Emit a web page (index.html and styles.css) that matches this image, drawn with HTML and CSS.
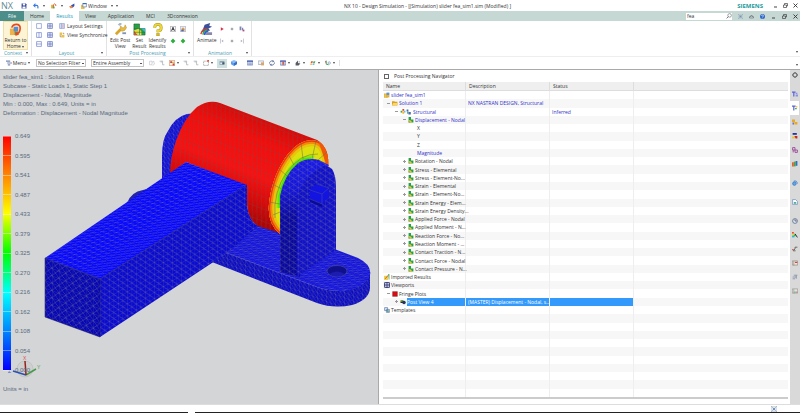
FILE: index.html
```
<!DOCTYPE html>
<html lang="en">
<head>
  <meta charset="utf-8">
  <title>NX 10 - Design Simulation</title>
  <link rel="stylesheet" href="styles.css">
</head>
<body>
  <svg class="sprite" aria-hidden="true">
    <symbol id="save" viewBox="0 0 10 10"><path fill="#2b3f98" d="M1 1h7l1 1v7H1z"/><path fill="#fff" d="M3 1h4v3H3zM2.500 6h5v3h-5z"/></symbol>
    <symbol id="undo" viewBox="0 0 10 10"><path fill="none" stroke="#3a7be0" stroke-width="2" d="M2 4h4q3 0 2 5"/><path fill="#3a7be0" d="M0 4l4-4v8z"/></symbol>
    <symbol id="repeat" viewBox="0 0 10 10"><path fill="#e8b64a" d="M0 3h4v6H0z"/><path fill="none" stroke="#e0502a" stroke-width="1.500" d="M4 7V3q2-3 4 0v2"/><path fill="#5aa45a" d="M3 6h3v3H3z"/></symbol>
    <symbol id="erase" viewBox="0 0 10 10"><path fill="#3850b0" d="M3 4l6-3v4L6 8z"/><path fill="#e08a50" d="M0 6l4-2 3 3-4 2z"/></symbol>
    <symbol id="window" viewBox="0 0 10 10"><path fill="#f0c040" d="M0 3h6v7H0z"/><path fill="#fff" stroke="#3a6ac0" d="M3 .5h6v6H3z"/><path fill="#3a6ac0" d="M3 0h6v2H3z"/></symbol>
    <symbol id="min" viewBox="0 0 10 10"><path fill="#444" d="M2 7h6v2H2z"/></symbol>
    <symbol id="restore" viewBox="0 0 10 10"><path fill="none" stroke="#444" stroke-width="1.400" d="M3 4V1h6v5H7M1 4h6v5H1z"/></symbol>
    <symbol id="close" viewBox="0 0 10 10"><path stroke="#333" stroke-width="1.800" d="M1 1l8 8M9 1L1 9"/></symbol>
    <symbol id="search" viewBox="0 0 10 10"><circle cx="6" cy="4" r="3" fill="none" stroke="#667"/><path stroke="#667" stroke-width="1.500" d="M4 6L1 9"/></symbol>
    <symbol id="full" viewBox="0 0 10 10"><path fill="none" stroke="#68809a" d="M0 0l3 3M10 0L7 3M0 10l3-3M10 10L7 7"/><path fill="#6f93bc" d="M3 3h4v4H3z"/><path fill="none" stroke="#b4c0cc" d="M1 1h8v8H1z"/></symbol>
    <symbol id="up" viewBox="0 0 10 10"><path fill="none" stroke="#556" d="M1 6l4-4 4 4M1 8h8V6L5 4 1 6z"/></symbol>
    <symbol id="help" viewBox="0 0 10 10"><circle cx="5" cy="5" r="5" fill="#2f66c8"/><path fill="none" stroke="#fff" stroke-width="1.200" d="M3 4q0-2 2-2t2 2l-2 2M5 7v1.500"/></symbol>

    <symbol id="return" viewBox="0 0 14 14"><path fill="#f0b04c" d="M1 6h6v7H1z"/><path fill="#5c8cd0" d="M5 4h5v5H5z"/><path fill="#5aa05a" d="M6 9h4v4H6z"/><path fill="none" stroke="#e8481c" stroke-width="1.800" d="M3 5q1-3.500 5-3.500t4 4q0 5-3 6"/><path fill="#e8481c" d="M7 9v5l4-2z"/></symbol>
    <symbol id="one" viewBox="0 0 10 10"><path fill="#fff" stroke="#6a7fc4" d="M1 1h8v8H1z"/></symbol>
    <symbol id="four" viewBox="0 0 10 10"><path fill="#e8ecfa" stroke="#4a5fb4" d="M1 1h8v8H1zM5 1v8M1 5h8"/></symbol>
    <symbol id="cols" viewBox="0 0 10 10"><path fill="#fff" stroke="#5a6fc4" d="M1 1h8v8H1zM5 1v8"/></symbol>
    <symbol id="rows" viewBox="0 0 10 10"><path fill="#fff" stroke="#5a6fc4" d="M1 1h8v8H1zM1 5h8"/></symbol>
    <symbol id="settings" viewBox="0 0 10 10"><path fill="#dfe6f8" stroke="#7a8cc8" d="M1 1h8v8H1zM4 1v8"/><path stroke="#c87a9a" d="M5 3.500h3M5 6.500h3"/></symbol>
    <symbol id="sync" viewBox="0 0 10 10"><path fill="#e8c04a" d="M1 1h4v4H1zM4 5h5v4H4z"/><path fill="none" stroke="#8a6a2a" d="M2 5v3h2M6 2h2v2"/></symbol>
    <symbol id="wrench" viewBox="0 0 14 14"><path fill="none" stroke="#d8a628" stroke-width="3" d="M2 12l5-5"/><path fill="#e8bc3c" stroke="#b08a28" stroke-width=".5" d="M7 3l2 2 2 0 1-3 1.500 3-2 3-3 1-2-2z"/><path fill="#a8b4c8" d="M6 0h2v2l-2 1-2-1z"/><path fill="#8494b4" d="M9 10h4v2H9z"/></symbol>
    <symbol id="result" viewBox="0 0 14 14"><path fill="#28a048" stroke="#175c2a" stroke-width=".6" d="M1 1h6v5h6v7H1z"/><path fill="#f0d838" d="M1 8l5-2 3 3v4H4z"/><path fill="#e84a2c" d="M1 9l4 4H1z"/><path fill="#3ab8d8" d="M9 6h4v4z"/><path stroke="#174" stroke-width=".6" d="M1 6h6M7 6v7M1 10h12"/></symbol>
    <symbol id="identify" viewBox="0 0 14 14"><path fill="none" stroke="#a89018" stroke-width="3" d="M4 5q0-3.500 3.500-3.500T11 5 7.500 8.500v1.500"/><path fill="none" stroke="#ecd83c" stroke-width="2" d="M4 5q0-3.500 3.500-3.500T11 5 7.500 8.500v1.500"/><path fill="#d8bc28" stroke="#a89018" stroke-width=".5" d="M6 11h3v3H6z"/></symbol>
    <symbol id="anno" viewBox="0 0 10 10"><path fill="#fff" stroke="#888" d="M.5.500h9v9h-9z"/><path fill="none" stroke="#223" stroke-width="1.400" d="M2.500 8L5 2l2.500 6M3.500 6h3"/></symbol>
    <symbol id="drag" viewBox="0 0 10 10"><path fill="#eef" stroke="#99a" d="M.5.500h9v9h-9z"/><path fill="#d8a040" d="M2 5l3-3 3 3-1 4z"/><path fill="#4a68b8" d="M2 6h4v3H2z"/></symbol>
    <symbol id="plus" viewBox="0 0 10 10"><path fill="#2fae3f" d="M5 1l4 4-4 4-4-4z"/></symbol>
    <symbol id="animate" viewBox="0 0 14 14"><path fill="#3c4f9a" d="M5 2l6-2-1 3 3 1-4 2 2 2-5 1-4 1z"/><path fill="none" stroke="#e03a2a" stroke-width="1.500" d="M1 12q1-6 7-6"/><path fill="none" stroke="#3aa84a" stroke-width="1.500" d="M3 12.500q1-4.500 5-5"/><path fill="none" stroke="#2f5bd8" stroke-width="2" d="M5 13q0-4 4-4"/><path fill="#88a" d="M7 10h6v3H6z"/></symbol>
    <symbol id="play" viewBox="0 0 10 10"><path fill="#d8324a" d="M3 2l5 3-5 3z"/></symbol>
    <symbol id="stop" viewBox="0 0 10 10"><path fill="#a9a9b3" d="M3 3h4v4H3z"/></symbol>
    <symbol id="export" viewBox="0 0 10 10"><path fill="#7a88b0" d="M1 1h3v6H1zM5 3h2v4H5z"/><path fill="#b04a8a" d="M6 6h3v3H6z"/></symbol>
    <symbol id="prev" viewBox="0 0 10 10"><path fill="#aab" d="M2 1h1v8H2zM7 3v4L4 5z"/></symbol>
    <symbol id="next" viewBox="0 0 10 10"><path fill="#aab" d="M7 1h1v8H7zM3 3v4l3-2z"/></symbol>

    <symbol id="menu" viewBox="0 0 10 10"><path fill="#7a8ab0" d="M0 1h7v2H0zM2 4h8v2H2zM3 7h4v2H3z"/></symbol>
    <symbol id="grey" viewBox="0 0 10 10"><path fill="none" stroke="#b8bcc4" d="M1 2h4v6H1zM5 4l3-2 1 5-3 2"/></symbol>
    <symbol id="path" viewBox="0 0 10 10"><path fill="none" stroke="#b4b8c0" stroke-width="1.500" d="M1 2h5v6h3M3 4l3-2"/></symbol>
    <symbol id="pick" viewBox="0 0 10 10"><path fill="#fdf3e4" stroke="#cc7a50" d="M.5.500h9v9h-9z"/><path fill="#c8463a" d="M2 2h3v3H2zM6 6h3v3H6z"/><path fill="#e0b040" d="M5 3h3v2H5z"/></symbol>
    <symbol id="rect" viewBox="0 0 10 10"><path fill="none" stroke="#777" stroke-dasharray="2 1" d="M1 2h8v7H1z"/><path fill="#d85a3a" d="M7 0h3v3H7z"/></symbol>
    <symbol id="shade" viewBox="0 0 10 10"><path fill="#7f93a8" d="M1 2h8v6H1z"/><path fill="#dfeaf4" d="M2 4h3v3H2z"/><path fill="#456" d="M6 4h3v3H6z"/></symbol>
    <symbol id="cube" viewBox="0 0 10 10"><path fill="#8abcf4" d="M5 0l5 2-5 3-5-3z"/><path fill="#5a9cf0" d="M0 2l5 3v5L0 7z"/><path fill="#3470c8" d="M10 2L5 5v5l5-3z"/></symbol>
    <symbol id="sheet" viewBox="0 0 10 10"><path fill="#e6ecf8" stroke="#5a70b0" d="M.5 1.500h9v7h-9z"/><path fill="#3f5cb0" d="M0 1h10v2H0z"/><path stroke="#5a70b0" d="M2 5h6M2 7h6"/></symbol>
    <symbol id="zoombox" viewBox="0 0 10 10"><path fill="#eef1f8" stroke="#8a96b0" d="M.5 1.500h9v6h-9z"/><path fill="#d8a86a" d="M5 4h5v5H5z"/></symbol>
    <symbol id="rotate" viewBox="0 0 10 10"><path fill="none" stroke="#5c6f98" stroke-width="1.500" d="M1 6a4 4 0 016-4M9 4a4 4 0 01-6 4"/><path fill="#5c6f98" d="M6 0l3 2-3 2zM4 6v4L1 8z"/></symbol>
    <symbol id="grid" viewBox="0 0 10 10"><path fill="#fff" stroke="#5060a8" d="M.5 1.500h9v7h-9zM3.500 1v8M6.500 1v8"/><path fill="#5868b8" d="M0 1h10v2H0z"/><path fill="#d86040" d="M4 3h3v5H4z"/></symbol>
    <symbol id="solid" viewBox="0 0 10 10"><path fill="#555c66" d="M1 5l4-4v4l4 1-3 3H1z"/><path fill="#9aa" d="M6 2h2v2H6z"/></symbol>
    <symbol id="colors" viewBox="0 0 10 10"><path fill="#e8582c" d="M2 2h3l-1 3H1z"/><path fill="#50b050" d="M6 2h3L8 5H5z"/><path fill="#f0a828" d="M1 6h3L3 8H0z"/><path fill="#38a8e0" d="M5 6h3L7 8H4z"/></symbol>
    <symbol id="axes" viewBox="0 0 10 10"><path fill="none" stroke="#3a9a4a" stroke-width="1.500" d="M2 1v6l4 1"/><path fill="#d8484a" d="M0 2h2v2H0z"/><circle cx="7" cy="5" r="2" fill="none" stroke="#6a7fb0"/></symbol>

    <symbol id="sim" viewBox="0 0 10 10"><path fill="#f2c94a" stroke="#a98428" stroke-width=".6" d="M0 3h6v6H0z"/><path fill="#5a94d8" d="M4 1h5v4H4z"/><path fill="#e8b030" d="M3 5h6v4H3z"/></symbol>
    <symbol id="folder" viewBox="0 0 10 10"><path fill="#d8a028" d="M0 2h4l1 1h4v6H0z"/><path fill="#f8d868" d="M2 5h8L8 9H0z"/></symbol>
    <symbol id="struct" viewBox="0 0 18 10"><path fill="#38a848" d="M0 3h3v3H0z"/><path fill="#e84030" d="M3 0h3v3H3z"/><path fill="#f0c030" d="M3 4h3v4H3z"/><path fill="#38b0e0" d="M6 3h2v3H6z"/><path fill="#4a6ab8" d="M10 1h3v3h-3zM13 5h4v4h-4z"/><path fill="#38a060" d="M11 4h2v4h-2z"/></symbol>
    <symbol id="fringe" viewBox="0 0 10 10"><path fill="#26a04a" d="M1 0h4v4h4v5H1z"/><path fill="#e8c838" d="M1 5l4 1 2 3H3z"/><path fill="#e06a2c" d="M1 7l2 2H1z"/></symbol>
    <symbol id="import" viewBox="0 0 10 10"><path fill="#f0d050" d="M0 3h7v7H0z"/><path stroke="#b84a38" stroke-width="1.300" d="M2 8l5-6"/><path fill="#48a058" d="M7 0h2v9H8z"/></symbol>
    <symbol id="viewport" viewBox="0 0 10 10"><path fill="#dfe3f8" stroke="#282f68" stroke-width="1.400" d="M1 1h8v8H1zM5 0v10M0 5h10"/></symbol>
    <symbol id="plots" viewBox="0 0 10 10"><path fill="#d80c14" stroke="#611" stroke-width=".6" d="M1 1h8v8H1z"/></symbol>
    <symbol id="post" viewBox="0 0 12 10"><path fill="#2a2a2a" d="M1 2h6v5H1z"/><path fill="#e8b828" d="M1 2h2v3H1z"/><circle cx="8" cy="6" r="3.500" fill="#26335c"/><path fill="#3cb04a" d="M3 1h3v3H3z"/></symbol>
    <symbol id="template" viewBox="0 0 10 10"><path fill="#dfe7f4" stroke="#4a68a0" d="M1 1h5v5H1zM4 4h5v5H4z"/><path fill="#3a9a68" d="M5 6h3v2H5z"/></symbol>

    <symbol id="gear" viewBox="0 0 10 10"><circle cx="5" cy="5" r="3.500" fill="none" stroke="#444" stroke-width="1.500"/><path stroke="#444" d="M5 0v2M5 8v2M0 5h2M8 5h2"/></symbol>
    <symbol id="nav" viewBox="0 0 10 10"><path fill="#5a62d8" d="M0 1h6v2H4v6H2V3H0z"/><path fill="#8a90e8" d="M6 3h3v2H6zM6 6h4v3H6z"/></symbol>
    <symbol id="postnav" viewBox="0 0 10 10"><path fill="#5a62d8" d="M0 1h6v2H4v6H2V3H0z"/><path fill="#e8b838" d="M6 2h3v2H6z"/><path fill="#48b060" d="M5 5h3v2H5z"/></symbol>
    <symbol id="part" viewBox="0 0 10 10"><path fill="#e8a828" d="M0 1h5v4H0zM4 5h5v4H4z"/><path fill="#4a58b0" d="M1 6h2v3H1z"/></symbol>
    <symbol id="reuse" viewBox="0 0 10 10"><path fill="#28309a" d="M1 0h7v3H1z"/><path fill="#e8c828" d="M0 6h5v3H0z"/><path fill="#c8282c" d="M4 5h5v4H6z"/></symbol>
    <symbol id="motion" viewBox="0 0 10 10"><path fill="none" stroke="#9a4a98" stroke-width="1.500" d="M1 1h4v4H1zM5 5h4v4H5zM2 5v4"/></symbol>
    <symbol id="lib" viewBox="0 0 10 10"><path fill="#e86028" d="M0 2h3v7H0z"/><path fill="#48a848" d="M3 1h3v8H3z"/><path fill="#2c6fc0" d="M6 0h3v8H6z"/></symbol>
    <symbol id="web" viewBox="0 0 10 10"><circle cx="4" cy="6" r="3" fill="#5aa8e8" stroke="#2a6cb8"/><path fill="none" stroke="#3c80d0" stroke-width="1.400" d="M3 2q5-2 6 4"/></symbol>
    <symbol id="doc" viewBox="0 0 10 10"><path fill="#fff" stroke="#4a7fb8" d="M1 1h5l3 3v5H1z"/><path fill="#58a8a0" d="M3 5h4v3H3z"/></symbol>
    <symbol id="clock" viewBox="0 0 10 10"><circle cx="5" cy="5" r="4" fill="#dde4ee" stroke="#556c8c" stroke-width="1.300"/><path fill="none" stroke="#334" d="M5 2v3h3"/></symbol>
    <symbol id="material" viewBox="0 0 10 10"><path fill="#f04828" d="M0 0h3v3H0z"/><path fill="#e8e028" d="M0 3h3v3H0z"/><path fill="#28b8d8" d="M0 6h4v3H0z"/><path fill="#30b850" d="M3 4h3v3H3z"/><path stroke="#222" stroke-width="1.500" d="M5 3l4 6"/></symbol>
    <symbol id="robot" viewBox="0 0 10 10"><path fill="none" stroke="#666" stroke-width="1.600" d="M9 2H5v3L2 8h4"/><path fill="#c87050" d="M0 5h3v2H0z"/></symbol>
    <symbol id="card" viewBox="0 0 10 10"><path fill="#e8e4e0" stroke="#8a7a70" d="M.5 1.500h9v7h-9zM3 2v7"/><path fill="#c8483c" d="M5 3h4v2H5z"/></symbol>
    <symbol id="scene" viewBox="0 0 10 10"><path fill="#e4e4e0" stroke="#8a8a84" d="M.5 1.500h9v7h-9zM3 2v7"/><path fill="#58a078" d="M4 6h2v2H4z"/><path fill="#c87860" d="M7 6h2v2H7z"/></symbol>
    <symbol id="flow" viewBox="0 0 10 10"><path fill="none" stroke="#7c8ba8" stroke-width="1.300" d="M3 2h6M1 5h7M1 8h4M7 2v6"/></symbol>
  </svg>

  <header class="titlebar">
    <span class="nx">NX</span>
    <div class="quick">
      <button aria-label="Save"><svg><use href="#save"/></svg></button>
      <button class="drop" aria-label="Undo"><svg><use href="#undo"/></svg></button>
      <button class="drop" aria-label="Repeat"><svg><use href="#repeat"/></svg></button>
      <button aria-label="Erase"><svg><use href="#erase"/></svg></button>
      <button class="drop"><svg><use href="#window"/></svg>Window</button>
      <button class="drop more" aria-label="Customize"></button>
    </div>
    <h1>NX 10 - Design Simulation - [(Simulation) slider fea_sim1.sim (Modified) ]</h1>
    <span class="brand">SIEMENS</span>
    <div class="controls">
      <button aria-label="Minimize"><svg><use href="#min"/></svg></button>
      <button aria-label="Restore"><svg><use href="#restore"/></svg></button>
      <button aria-label="Close"><svg><use href="#close"/></svg></button>
    </div>
  </header>

  <nav class="tabs">
    <a class="file" href="#">File</a>
    <a href="#">Home</a>
    <a class="active" href="#">Results</a>
    <a href="#">View</a>
    <a href="#">Application</a>
    <a href="#">MCI</a>
    <a href="#">3Dconnexion</a>
    <label class="search"><input type="text" value="fea" aria-label="Command finder"><svg><use href="#search"/></svg></label>
    <div class="controls">
      <button aria-label="Full screen"><svg><use href="#full"/></svg></button>
      <button aria-label="Minimize ribbon"><svg><use href="#up"/></svg></button>
      <button aria-label="Help"><svg><use href="#help"/></svg></button>
      <button aria-label="Minimize"><svg><use href="#min"/></svg></button>
      <button aria-label="Restore"><svg><use href="#restore"/></svg></button>
      <button aria-label="Close"><svg><use href="#close"/></svg></button>
    </div>
  </nav>

  <div class="ribbon">
    <section class="group context">
      <div class="tools">
        <button class="big hot"><svg><use href="#return"/></svg><span>Return to<br>Home <i class="caret"></i></span></button>
      </div>
      <h2>Context</h2>
    </section>
    <section class="group layout">
      <div class="tools">
        <div class="views">
          <button aria-label="Single"><svg><use href="#one"/></svg></button>
          <button aria-label="Four views"><svg><use href="#four"/></svg></button>
          <button aria-label="Side by side"><svg><use href="#cols"/></svg></button>
          <button aria-label="Six views"><svg><use href="#four"/></svg></button>
          <button aria-label="Upper and lower"><svg><use href="#rows"/></svg></button>
          <button aria-label="Nine views"><svg><use href="#four"/></svg></button>
        </div>
        <div class="lines">
          <button><svg><use href="#settings"/></svg>Layout Settings</button>
          <button><svg><use href="#sync"/></svg>View Synchronize</button>
        </div>
      </div>
      <h2>Layout</h2>
    </section>
    <section class="group post">
      <div class="tools">
        <button class="big"><svg><use href="#wrench"/></svg><span>Edit Post<br>View</span></button>
        <button class="big"><svg><use href="#result"/></svg><span>Set<br>Result</span></button>
        <button class="big"><svg><use href="#identify"/></svg><span>Identify<br>Results</span></button>
        <div class="small two">
          <button aria-label="Annotation"><svg><use href="#anno"/></svg></button>
          <button aria-label="Drag annotation"><svg><use href="#drag"/></svg></button>
          <button aria-label="Previous mode"><svg><use href="#plus"/></svg></button>
          <button aria-label="Next mode"><svg><use href="#plus"/></svg></button>
        </div>
      </div>
      <h2>Post Processing</h2>
    </section>
    <section class="group anim">
      <div class="tools">
        <button class="big"><svg><use href="#animate"/></svg><span>Animate</span></button>
        <div class="small three">
          <button aria-label="Play"><svg><use href="#play"/></svg></button>
          <button aria-label="Stop"><svg><use href="#stop"/></svg></button>
          <button aria-label="Export"><svg><use href="#export"/></svg></button>
          <button aria-label="Previous"><svg><use href="#prev"/></svg></button>
          <button aria-label="Pause"><svg><use href="#stop"/></svg></button>
          <button aria-label="Next"><svg><use href="#next"/></svg></button>
        </div>
      </div>
      <h2>Animation</h2>
    </section>
    <i class="caret end"></i>
  </div>

  <div class="selection">
    <button class="menu drop"><svg><use href="#menu"/></svg>Menu</button>
    <select class="filter" aria-label="Type filter"><option>No Selection Filter</option></select>
    <select class="scope" aria-label="Selection scope"><option>Entire Assembly</option></select>
    <div class="icons">
      <button aria-label="Reset"><svg><use href="#grey"/></svg></button>
      <button aria-label="Path"><svg><use href="#path"/></svg></button>
      <button class="drop" aria-label="Pick"><svg><use href="#pick"/></svg></button>
      <button aria-label="Chain"><svg><use href="#path"/></svg></button>
      <button aria-label="Deselect"><svg><use href="#path"/></svg></button>
      <button class="drop" aria-label="Rectangle"><svg><use href="#rect"/></svg></button>
      <button class="on" aria-label="Shaded"><svg><use href="#shade"/></svg></button>
      <button aria-label="Cube"><svg><use href="#cube"/></svg></button>
    </div>
    <div class="icons view">
      <button aria-label="Fit"><svg><use href="#sheet"/></svg></button>
      <button aria-label="Zoom"><svg><use href="#zoombox"/></svg></button>
      <button aria-label="Rotate"><svg><use href="#rotate"/></svg></button>
      <button class="drop" aria-label="Grid"><svg><use href="#grid"/></svg></button>
      <button class="drop" aria-label="Style"><svg><use href="#solid"/></svg></button>
      <button class="drop" aria-label="Background"><svg><use href="#colors"/></svg></button>
      <button class="drop" aria-label="Orient"><svg><use href="#axes"/></svg></button>
    </div>
    <i class="caret end"></i>
  </div>

  <main>
    <section class="graphics">
      <svg class="model" viewBox="0 70 378 334" preserveAspectRatio="xMinYMin meet" role="img" aria-label="Slider displacement plot">
        <defs>
          <!-- one mesh cell is a 10x10 square with a diagonal, skewed onto each face -->
          <pattern id="mTop" width="10" height="10" patternUnits="userSpaceOnUse" patternTransform="matrix(.46 -.3 .5 .19 45 258)">
            <path class="wire" d="M0 0h10M0 0v10M0 0l10 10"/>
          </pattern>
          <pattern id="mFront" width="10" height="10" patternUnits="userSpaceOnUse" patternTransform="matrix(.69 .26 0 .74 45 258)">
            <path class="wire thin" d="M0 0h10M0 0v10M0 10l10-10M0 0l10 10"/>
          </pattern>
          <pattern id="mSide" width="10" height="10" patternUnits="userSpaceOnUse" patternTransform="matrix(.45 -.29 0 .6 100 279)">
            <path class="wire" d="M0 0h10M0 0v10M0 0l10 10"/>
          </pattern>
          <pattern id="mBase" width="10" height="10" patternUnits="userSpaceOnUse" patternTransform="matrix(.5 .19 .4 -.26 227 253)">
            <path class="wire" d="M0 0h10M0 0v10M0 0l10 10"/>
          </pattern>
          <pattern id="mEdge" width="10" height="10" patternUnits="userSpaceOnUse" patternTransform="matrix(.45 .17 0 .52 227 253)">
            <path class="wire" d="M0 0h10M0 0v10M0 0l10 10"/>
          </pattern>
          <pattern id="mRed" width="10" height="10" patternUnits="userSpaceOnUse" patternTransform="matrix(.45 .18 -.45 1.050 212 102)">
            <path class="wire red" d="M0 0h10M0 0v10M0 0l10 10"/>
          </pattern>
          <linearGradient id="gRed" gradientUnits="userSpaceOnUse" x1="262" y1="118" x2="221" y2="222">
            <stop offset="0" stop-color="#d80a08"/><stop offset=".2" stop-color="#f60c0a"/>
            <stop offset=".5" stop-color="#fa1010"/><stop offset=".68" stop-color="#e00808"/><stop offset=".95" stop-color="#a00204"/>
          </linearGradient>
          <linearGradient id="gLug" x1="0" y1="0" x2="0" y2="1">
            <stop offset="0" stop-color="#1818e8"/><stop offset=".25" stop-color="#1515dc"/><stop offset=".5" stop-color="#0808a0"/>
          </linearGradient>
          <clipPath id="ring"><path d="M280 234Q267 223 269 204Q272 175 288 154Q302 137 317 141Q330 147 328 168L300 190L280 205Z"/></clipPath>
        </defs>

        <!-- rear lug -->
        <path fill="#1010d8" d="M162 182V156Q162 139 168 131Q175 117 187 114L200 113L176 180Z"/>
        <path fill="url(#mEdge)" d="M162 182V156Q162 139 168 131Q175 117 187 114L200 113L176 180Z"/>
        <path fill="#2424a8" d="M127 203Q131 192 143 190L151 188L148 200Z"/>

        <!-- base plate -->
        <path fill="#0c0cc4" d="M212 262L227 253L317 287Q343 296 362 284Q370 278 370 270V288Q369 300 352 305Q334 309 317 303Z"/>
        <path fill="url(#mEdge)" d="M212 262L227 253L317 287Q343 296 362 284Q370 278 370 270V288Q369 300 352 305Q334 309 317 303Z"/>
        <path fill="#1414e0" d="M227 253L258 222L300 236L337 250L358 258Q372 265 370 275Q364 290 340 291Q328 291 317 287Z"/>
        <path fill="url(#mBase)" d="M227 253L258 222L300 236L337 250L358 258Q372 265 370 275Q364 290 340 291Q328 291 317 287Z"/>
        <ellipse cx="337" cy="271" rx="10" ry="5.500" fill="#10108c" stroke="#555a90" stroke-width=".5"/>
        <path fill="#1c1cb0" d="M329 274q8-5 16 0-8 5-16 0z"/>

        <!-- roller -->
        <path fill="url(#gRed)" d="M170 174Q170 158 176 141Q184 118 197 107Q209 99 220 103L317 140Q328 146 328 164L280 233L258 226Q248 220 247 205V186L186 162Z"/>
        <path fill="url(#mRed)" d="M170 174Q170 158 176 141Q184 118 197 107Q209 99 220 103L317 140Q328 146 328 164L280 233L258 226Q248 220 247 205V186L186 162Z"/>
        <g clip-path="url(#ring)" fill="none">
          <path fill="#dde00c" d="M260 130h75v110h-75z"/>
          <path stroke="#e8c40c" stroke-width="12" d="M280 234Q267 223 269 204Q272 175 288 154Q302 137 317 141Q330 147 328 168"/>
          <path stroke="#f08a0c" stroke-width="7" d="M280 234Q267 223 269 204Q272 175 288 154Q302 137 317 141Q330 147 328 168"/>
          <path stroke="#f0380c" stroke-width="3" d="M280 234Q267 223 269 204Q272 175 288 154Q302 137 317 141Q330 147 328 168"/>
          <path stroke="#8ae80c" stroke-width="7" d="M280 208V196Q284 175 298 163Q306 158 314 159"/>
          <path stroke="#4ae00c" stroke-width="3" d="M280 208V196Q284 175 298 163Q304 159 311 159"/>
          <path stroke="#f0580c" stroke-width="5" d="M321 141L330 168"/>
        </g>
        <path class="spokes" d="M273 215l7-3M269 202l11 2M272 184l10 5M279 169l8 7M288 154l6 11M301 143l2 16M316 141l-4 18M327 152l-9 8M275 218q-2-27 12-46t31-18"/>

        <!-- front lug -->
        <path fill="url(#gLug)" d="M280 272V196Q284 175 298 163Q308 157 319 160L329 165L300 197V277Z"/>
        <path fill="url(#mSide)" d="M280 272V196Q284 175 298 163Q308 157 319 160L329 165L300 197V277Z"/>
        <path fill="#1010ca" d="M297 277V202Q299 184 315 171Q325 162 332 169Q336 175 336 188V250Z"/>
        <path fill="url(#mSide)" d="M297 277V202Q299 184 315 171Q325 162 332 169Q336 175 336 188V250Z"/>
        <path fill="#1414e0" d="M310 190l7-6 12 4v9l-7 7-12-5z"/>
        <path fill="#0a0a98" d="M310 199l12 5v3l-12-5z"/>
        <path fill="none" stroke="#4c5090" stroke-width=".5" d="M317 184l12 4M310 190l12 4 7-6M322 194v10M310 199l12 5"/>

        <!-- slider arm -->
        <path fill="#0707b4" d="M45 258L100 279V337L45 317Z"/>
        <path fill="url(#mFront)" d="M45 258L100 279V337L45 317Z"/>
        <path fill="#0a0ad0" d="M100 279L247 185V206Q249 221 258 226L227 253L100 337Z"/>
        <path fill="url(#mSide)" d="M100 279L247 185V206Q249 221 258 226L227 253L100 337Z"/>
        <path fill="#0808ff" d="M45 258L186 162L247 185L100 279Z"/>
        <path fill="url(#mTop)" d="M45 258L186 162L247 185L100 279Z"/>
        <path class="outline" d="M45 258L100 279V337M100 279L247 185M45 258V317L100 337"/>

        <!-- view triad -->
        <g class="triad">
          <ellipse cx="25" cy="369" rx="8" ry="8"/>
          <path stroke="#2a50b8" d="M26 375L13 371"/>
          <path stroke="#48984c" d="M26 375L36 369"/>
          <path stroke="#98201c" d="M26 375L25 361"/>
          <text x="23" y="360" fill="#e05050">X</text>
          <text x="37" y="369" fill="#48a04c">Y</text>
          <text x="8" y="373" fill="#3a60c8">Z</text>
        </g>
      </svg>
      <div class="overlay">
        <p>slider fea_sim1 : Solution 1 Result<br>
          Subcase - Static Loads 1, Static Step 1<br>
          Displacement - Nodal, Magnitude<br>
          Min : 0.000, Max : 0.649, Units = in<br>
          Deformation : Displacement - Nodal Magnitude</p>
        <ul class="legend">
          <li>0.649</li><li>0.595</li><li>0.541</li><li>0.487</li><li>0.433</li><li>0.379</li><li>0.325</li>
          <li>0.270</li><li>0.216</li><li>0.162</li><li>0.108</li><li>0.054</li><li>0.000</li>
        </ul>
        <p>Units = in</p>
      </div>
    </section>

    <section class="navigator">
      <h2><i class="pin"></i>Post Processing Navigator</h2>
      <table>
        <thead>
          <tr><th>Name</th><th>Description</th><th>Status</th><th></th></tr>
        </thead>
        <tbody>
          <tr class="blue"><td class="l0"><svg><use href="#sim"/></svg><span>slider fea_sim1</span></td><td></td><td></td><td></td></tr>
          <tr class="blue"><td class="l1"><button class="tog open" aria-label="Collapse"></button><svg><use href="#folder"/></svg><span>Solution 1</span></td><td>NX NASTRAN DESIGN, Structural</td><td></td><td></td></tr>
          <tr class="blue"><td class="l2"><button class="tog open" aria-label="Collapse"></button><svg class="wide"><use href="#struct"/></svg><span>Structural</span></td><td></td><td>Inferred</td><td></td></tr>
          <tr class="blue"><td class="l3"><button class="tog open" aria-label="Collapse"></button><svg><use href="#fringe"/></svg><span>Displacement - Nodal</span></td><td></td><td></td><td></td></tr>
          <tr><td class="l4"><span>X</span></td><td></td><td></td><td></td></tr>
          <tr><td class="l4"><span>Y</span></td><td></td><td></td><td></td></tr>
          <tr><td class="l4"><span>Z</span></td><td></td><td></td><td></td></tr>
          <tr class="blue"><td class="l4"><span>Magnitude</span></td><td></td><td></td><td></td></tr>
          <tr><td class="l3"><button class="tog" aria-label="Expand"></button><svg><use href="#fringe"/></svg><span>Rotation - Nodal</span></td><td></td><td></td><td></td></tr>
          <tr><td class="l3"><button class="tog" aria-label="Expand"></button><svg><use href="#fringe"/></svg><span>Stress - Elemental</span></td><td></td><td></td><td></td></tr>
          <tr><td class="l3"><button class="tog" aria-label="Expand"></button><svg><use href="#fringe"/></svg><span>Stress - Element-No...</span></td><td></td><td></td><td></td></tr>
          <tr><td class="l3"><button class="tog" aria-label="Expand"></button><svg><use href="#fringe"/></svg><span>Strain - Elemental</span></td><td></td><td></td><td></td></tr>
          <tr><td class="l3"><button class="tog" aria-label="Expand"></button><svg><use href="#fringe"/></svg><span>Strain - Element-No...</span></td><td></td><td></td><td></td></tr>
          <tr><td class="l3"><button class="tog" aria-label="Expand"></button><svg><use href="#fringe"/></svg><span>Strain Energy - Elem...</span></td><td></td><td></td><td></td></tr>
          <tr><td class="l3"><button class="tog" aria-label="Expand"></button><svg><use href="#fringe"/></svg><span>Strain Energy Density...</span></td><td></td><td></td><td></td></tr>
          <tr><td class="l3"><button class="tog" aria-label="Expand"></button><svg><use href="#fringe"/></svg><span>Applied Force - Nodal</span></td><td></td><td></td><td></td></tr>
          <tr><td class="l3"><button class="tog" aria-label="Expand"></button><svg><use href="#fringe"/></svg><span>Applied Moment - N...</span></td><td></td><td></td><td></td></tr>
          <tr><td class="l3"><button class="tog" aria-label="Expand"></button><svg><use href="#fringe"/></svg><span>Reaction Force - No...</span></td><td></td><td></td><td></td></tr>
          <tr><td class="l3"><button class="tog" aria-label="Expand"></button><svg><use href="#fringe"/></svg><span>Reaction Moment - ...</span></td><td></td><td></td><td></td></tr>
          <tr><td class="l3"><button class="tog" aria-label="Expand"></button><svg><use href="#fringe"/></svg><span>Contact Traction - N...</span></td><td></td><td></td><td></td></tr>
          <tr><td class="l3"><button class="tog" aria-label="Expand"></button><svg><use href="#fringe"/></svg><span>Contact Force - Nodal</span></td><td></td><td></td><td></td></tr>
          <tr><td class="l3"><button class="tog" aria-label="Expand"></button><svg><use href="#fringe"/></svg><span>Contact Pressure - N...</span></td><td></td><td></td><td></td></tr>
          <tr><td class="l0"><svg><use href="#import"/></svg><span>Imported Results</span></td><td></td><td></td><td></td></tr>
          <tr><td class="l0"><svg><use href="#viewport"/></svg><span>Viewports</span></td><td></td><td></td><td></td></tr>
          <tr><td class="l1"><button class="tog open" aria-label="Collapse"></button><svg><use href="#plots"/></svg><span>Fringe Plots</span></td><td></td><td></td><td></td></tr>
          <tr class="selected"><td class="l2"><button class="tog" aria-label="Expand"></button><svg><use href="#post"/></svg><span>Post View 4</span></td><td>(MASTER) Displacement - Nodal, s...</td><td></td><td></td></tr>
          <tr><td class="l0"><svg><use href="#template"/></svg><span>Templates</span></td><td></td><td></td><td></td></tr>
          <tr><td></td><td></td><td></td><td></td></tr>
          <tr><td></td><td></td><td></td><td></td></tr>
          <tr><td></td><td></td><td></td><td></td></tr>
          <tr><td></td><td></td><td></td><td></td></tr>
          <tr><td></td><td></td><td></td><td></td></tr>
          <tr><td></td><td></td><td></td><td></td></tr>
          <tr><td></td><td></td><td></td><td></td></tr>
          <tr><td></td><td></td><td></td><td></td></tr>
          <tr><td></td><td></td><td></td><td></td></tr>
          <tr><td></td><td></td><td></td><td></td></tr>
        </tbody>
      </table>
    </section>

    <aside class="resources">
      <button class="gear" aria-label="Settings"><svg><use href="#gear"/></svg></button>
      <button aria-label="Simulation Navigator"><svg><use href="#nav"/></svg></button>
      <button class="current" aria-label="Post Processing Navigator"><svg><use href="#postnav"/></svg></button>
      <button aria-label="Assembly Navigator"><svg><use href="#part"/></svg></button>
      <button aria-label="Constraint Navigator"><svg><use href="#reuse"/></svg></button>
      <button aria-label="Part Navigator"><svg><use href="#motion"/></svg></button>
      <button aria-label="Reuse Library"><svg><use href="#lib"/></svg></button>
      <button class="gap" aria-label="Web Browser"><svg><use href="#web"/></svg></button>
      <button class="gap" aria-label="HD3D Tools"><svg><use href="#doc"/></svg></button>
      <button class="gap" aria-label="History"><svg><use href="#clock"/></svg></button>
      <button aria-label="System Materials"><svg><use href="#material"/></svg></button>
      <button aria-label="Process Studio"><svg><use href="#robot"/></svg></button>
      <button aria-label="Wizards"><svg><use href="#card"/></svg></button>
      <button aria-label="Roles"><svg><use href="#flow"/></svg></button>
      <button aria-label="Scenes"><svg><use href="#scene"/></svg></button>
    </aside>
  </main>

  <footer>
    <button aria-label="Full screen"><svg><use href="#full"/></svg></button>
  </footer>
  <div class="taskbar"><span></span><span></span></div>
</body>
</html>
```

FILE: styles.css
```
* {
  box-sizing: border-box;
}

body {
  margin: 0;
  height: 100vh;
  display: flex;
  flex-direction: column;
  overflow: hidden;
  background: #fff;
  color: #333;
  font: 5px/6px "Open Sans", "Noto Sans", sans-serif;
}

h1, h2, p, ul {
  margin: 0;
  padding: 0;
  font-size: inherit;
  font-weight: normal;
}

.sprite {
  display: none;
}

button {
  display: flex;
  align-items: center;
  justify-content: center;
  flex: none;
  padding: 0;
  border: 0;
  background: none;
  color: inherit;
  font: inherit;
  white-space: nowrap;
}

button svg, td svg, .search svg {
  display: block;
  flex: none;
  width: 6px;
  height: 6px;
}

/* drop-down arrows */
.caret, .drop::after {
  content: '';
  display: inline-block;
  flex: none;
  border: 1px solid transparent;
  border-top: 2px solid #444;
  border-bottom: 0;
}

.drop::after {
  margin-left: 3px;
}

.end {
  margin: auto 2px 3px auto;
}

/* title bar */
.titlebar {
  display: flex;
  align-items: center;
  height: 11px;
  flex: none;
}

.nx {
  width: 21px;
  padding-left: 1px;
  color: #5f8c94;
  font: 9px/10px "Open Sans", sans-serif;
}

.quick {
  display: flex;
  align-items: center;
  gap: 6px;
  width: 180px;
}

.quick button {
  gap: 1px;
}

.quick .more::after {
  margin: 0;
}

.quick .more {
  margin-left: -3px;
}

h1 {
  flex: 1;
  padding-right: 83px;
  text-align: center;
  white-space: nowrap;
}

.brand {
  margin-right: 10px;
  color: #1f9a9a;
  font: bold 6px/6px "Open Sans", sans-serif;
}

.controls {
  display: flex;
  align-items: center;
  gap: 5px;
  padding-right: 2px;
}

.controls svg {
  width: 5px;
  height: 5px;
}

.tabs .controls {
  gap: 6px;
}

/* tabs */
.tabs {
  display: flex;
  align-items: center;
  height: 10px;
  flex: none;
  background: #c6d8d4;
}

.tabs a {
  padding: 0 6px;
  color: #333;
  line-height: 10px;
  text-decoration: none;
}

.tabs .file {
  width: 24px;
  background: #4c8e8a;
  color: #fff;
  text-align: center;
}

.tabs .active {
  background: #fff;
  color: #2196b8;
}

.search {
  display: flex;
  align-items: center;
  width: 46px;
  height: 7px;
  margin: 0 6px 0 auto;
  background: #fff;
}

.search input {
  flex: 1;
  min-width: 0;
  height: 7px;
  padding: 0 1px;
  border: 0;
  background: none;
  color: #333;
  font: inherit;
}

/* ribbon */
.ribbon {
  display: flex;
  height: 36px;
  flex: none;
  border-bottom: 1px solid #eee;
}

.group {
  display: flex;
  flex-direction: column;
  border-right: 1px solid #e2e2e2;
}

.group h2 {
  display: flex;
  justify-content: center;
  color: #4a9db4;
}

.group h2::after {
  content: '';
  align-self: center;
  margin: 0 3px 0 auto;
  border: 1px solid transparent;
  border-top: 2px solid #444;
  border-bottom: 0;
}

.group h2::before {
  content: '';
  margin-right: auto;
}

.context { width: 32px; }
.layout { width: 75px; }
.post { width: 87px; }
.anim { width: 58px; }

.tools {
  display: flex;
  flex: 1;
  align-items: flex-start;
}

.big {
  flex-direction: column;
  min-width: 18px;
  padding-top: 1px;
}

.big svg {
  width: 13px;
  height: 13px;
  margin: 1px 0;
}

.big .caret {
  vertical-align: middle;
}

.hot {
  width: 25px;
  margin-left: 3px;
  padding: 0;
  border: 1px solid #f0dfa4;
  background: #fdf4d6;
}

.views {
  display: grid;
  grid-template-columns: 11px 11px;
  gap: 3px 0;
  padding: 2px 4px 0 1px;
}

.lines {
  display: grid;
  gap: 3px;
  padding-top: 2px;
}

.lines button {
  gap: 2px;
  justify-content: flex-start;
}

.post .tools {
  padding-left: 3px;
}

.anim .tools {
  padding-left: 3px;
}

.small {
  display: grid;
  gap: 6px 0;
  padding-top: 5px;
}

.two {
  grid-template-columns: 10px 10px;
  margin-left: 2px;
}

.three {
  grid-template-columns: 10px 10px 10px;
}

/* selection bar */
.selection {
  display: flex;
  align-items: center;
  height: 12px;
  flex: none;
}

.menu {
  width: 28px;
  margin: 0 4px;
  gap: 1px;
}

.menu::after {
  margin-left: 1px;
}

select {
  width: 50px;
  height: 8px;
  margin-right: 5px;
  padding: 0 1px;
  border: 1px solid #c4c4c4;
  border-radius: 0;
  appearance: none;
  background: linear-gradient(#555, #555) calc(100% - 1px) 50% / 2px 1px no-repeat #fff;
  color: #333;
  font: inherit;
  line-height: 6px;
}

.scope {
  width: 53px;
}

.icons {
  display: flex;
  align-items: center;
  gap: 4px;
}

.icons .drop::after {
  margin-left: 2px;
}

.icons .on {
  width: 10px;
  height: 9px;
  background: #cfe2e0;
}

.view {
  gap: 5px;
  padding: 0 4px 0 10px;
  border-right: 1px solid #e2e2e2;
}

/* work area */
main {
  display: flex;
  flex: 1;
  min-height: 0;
  border-top: 1px solid #a9a9a9;
}

.graphics {
  position: relative;
  flex: 0 0 47.25%;
  overflow: hidden;
  background: #d3d5d6;
  color: #5a6a7e;
  font: 6px/9px "Liberation Sans", Arial, sans-serif;
}

.model {
  position: absolute;
  inset: 0;
  width: 100%;
  height: 100%;
}

.wire {
  fill: none;
  stroke: #85858f;
  stroke-width: 1;
  stroke-opacity: .65;
}

.thin {
  stroke-width: .7;
}

.red {
  stroke: #705050;
  stroke-opacity: .5;
}

.spokes, .outline {
  fill: none;
  stroke: #6c6c50;
  stroke-width: .5;
}

.outline {
  stroke: #15155c;
}

.triad ellipse {
  fill: #c8c8c8;
  fill-opacity: .4;
  stroke: #b4b4b4;
  stroke-width: .5;
}

.triad path {
  stroke-width: 1.5;
}

.triad text {
  font-size: 5px;
}

.overlay {
  position: relative;
  display: flex;
  flex-direction: column;
  height: 100%;
  padding: 3px 3px 10px;
  white-space: nowrap;
}

.legend {
  display: flex;
  flex: 1;
  flex-direction: column;
  justify-content: space-between;
  margin: 15px 0 12px;
  list-style: none;
  line-height: 6px;
  background: linear-gradient(#f00, #ff8000 16%, #ff0 33%, #0f0 50%, #0ff 67%, #0080ff 84%, #00f) 0 3px / 8px calc(100% - 6px) no-repeat;
}

.legend li {
  display: flex;
  align-items: center;
  gap: 4px;
}

.legend li::before {
  content: '';
  width: 8px;
  height: 1px;
  background: rgba(255, 255, 255, .4);
}

/* navigator */
.navigator {
  display: flex;
  flex: 1;
  flex-direction: column;
  min-width: 0;
  padding: 0 2px 5px 4px;
  border-left: 1px solid #a9a9a9;
}

.navigator h2 {
  display: flex;
  align-items: center;
  gap: 5px;
  padding: 3px 1px;
}

.pin {
  width: 5px;
  height: 5px;
  border: 1px solid #666;
}

table {
  display: flex;
  flex: 1;
  flex-direction: column;
  border-bottom: 2px solid #ccc;
}

tbody {
  display: grid;
  flex: 1;
  grid-auto-rows: minmax(8px, 1fr);
}

tr {
  display: grid;
  grid-template-columns: 83px 84px 84px 1fr;
}

tbody tr:nth-child(even) {
  background: #f7f7f7;
}

th {
  height: 9px;
  padding: 0 3px;
  border-right: 1px solid #ddd;
  border-bottom: 1px solid #ddd;
  background: #efefef;
  font-weight: normal;
  line-height: 8px;
  text-align: left;
}

td {
  display: flex;
  align-items: center;
  min-width: 0;
  padding: 0 2px;
  border-right: 1px solid #eee;
  line-height: 8px;
  white-space: nowrap;
}

th:last-child, td:last-child {
  border-right: 0;
}

td:first-child {
  gap: 1px;
  padding: 0 0 0 1px;
}

td.l1 { padding-left: 3px; }
td.l2 { padding-left: 11px; }
td.l3 { padding-left: 19px; }
td.l4 { padding-left: 34px; }

td .wide {
  width: 12px;
}

td span {
  flex: 1;
}

.blue {
  color: #3030c8;
}

.tog {
  width: 5px;
  height: 5px;
  background: linear-gradient(#999, #999) 1px 2px / 3px 1px no-repeat, linear-gradient(#999, #999) 2px 1px / 1px 3px no-repeat;
}

.tog.open {
  background: linear-gradient(#999, #999) 1px 2px / 3px 1px no-repeat;
}

.selected span, .selected td:nth-child(2), .selected td:nth-child(3) {
  align-self: stretch;
  background: #3399fa;
  color: #fff;
}

/* resource bar */
.resources {
  flex: none;
  width: 10px;
  background: #d9d9d9;
}

.resources button {
  width: 9px;
  height: 14px;
}

.resources .gear {
  height: 10px;
  margin-bottom: 7px;
}

.resources .gap {
  margin-top: 5px;
}

.resources .current {
  background: #fff;
}

/* status bar */
footer {
  display: flex;
  justify-content: flex-end;
  align-items: center;
  height: 8px;
  flex: none;
  padding-right: 23px;
  border-top: 1px solid #ddd;
}

.taskbar {
  display: flex;
  gap: 7px;
  flex: none;
}

.taskbar span {
  flex: 0 0 23.5%;
  height: 1px;
  background: #222;
}

.taskbar span + span {
  flex: 1;
}
```
